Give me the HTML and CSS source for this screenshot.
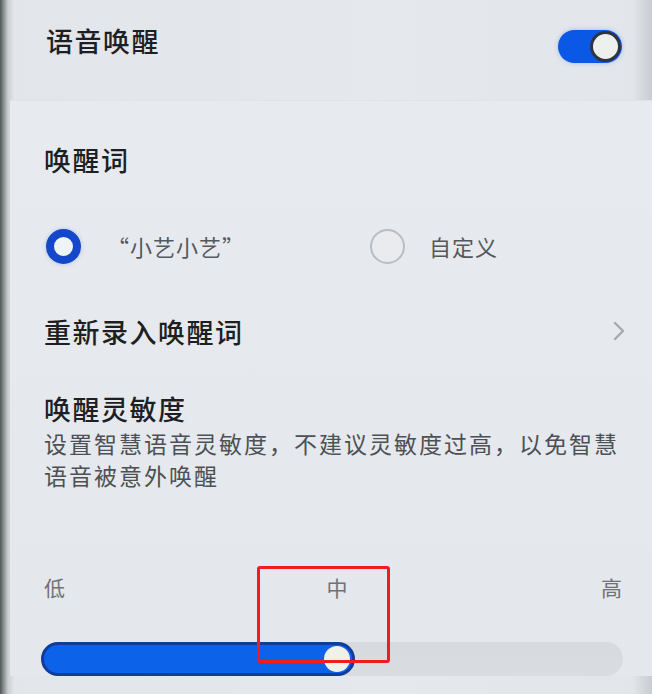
FILE: index.html
```html
<!DOCTYPE html>
<html lang="zh-CN">
<head>
    <meta charset="UTF-8">
    <meta name="viewport" content="width=device-width, initial-scale=1.0">
    <title>语音唤醒</title>
    <link rel="stylesheet" href="styles.css">
</head>
<body>
    <div class="screen">
        <div class="top-row">
            <span class="title">语音唤醒</span>
            <div class="toggle"><div class="toggle-knob"></div></div>
        </div>

        <div class="card">
            <div class="row heading-row">
                <span class="title">唤醒词</span>
            </div>

            <div class="row radio-row">
                <label class="radio-option">
                    <span class="radio radio-on"></span>
                    <span class="radio-text">“小艺小艺”</span>
                </label>
                <label class="radio-option second">
                    <span class="radio"></span>
                    <span class="radio-text">自定义</span>
                </label>
            </div>

            <div class="row link-row">
                <span class="title">重新录入唤醒词</span>
                <svg class="chevron" width="14" height="22" viewBox="0 0 14 22">
                    <path d="M3 3 L11 11 L3 19" fill="none" stroke="#a6a9ae" stroke-width="2.4" stroke-linecap="round" stroke-linejoin="round"/>
                </svg>
            </div>

            <div class="sensitivity">
                <div class="title sens-title">唤醒灵敏度</div>
                <div class="desc">设置智慧语音灵敏度，不建议灵敏度过高，以免智慧<br>语音被意外唤醒</div>
            </div>

            <div class="levels">
                <span>低</span>
                <span class="mid">中</span>
                <span>高</span>
            </div>

            <div class="slider">
                <div class="slider-fill" style="width: 54%"><span class="slider-knob"></span></div>
            </div>
        </div>

        <div class="highlight"></div>
    </div>
</body>
</html>
```

FILE: styles.css
```css
body {
    margin: 0;
    font-family: "Noto Sans CJK SC", "Noto Sans", sans-serif;
    background: #e3e6eb;
}

.screen {
    position: relative;
    width: 652px;
    height: 694px;
    overflow: hidden;
    box-sizing: border-box;
    padding-left: 10px;
    background: linear-gradient(to right, #4f5756 0, #8d9694 4px, #c9cdd0 8px, #e2e5ea 14px, #e5e8ec 60%, #e2e5e9 97%, #c8ccd0 100%);
    color: #1f2124;
}

.title {
    font-size: 27px;
    font-weight: 500;
    letter-spacing: 1.5px;
    color: #1d1f22;
}

.top-row {
    height: 80px;
    display: flex;
    align-items: center;
    justify-content: space-between;
    padding: 0 30px 0 36px;
}

.toggle {
    width: 64px;
    height: 33px;
    margin-top: 12px;
    border-radius: 17px;
    background: #0b58e6;
    box-shadow: 0 0 4px rgba(80, 130, 255, 0.45);
    display: flex;
    justify-content: flex-end;
    align-items: center;
    padding-right: 1px;
    box-sizing: border-box;
}

.toggle-knob {
    width: 31px;
    height: 31px;
    border-radius: 50%;
    background: #eef0ee;
    border: 3px solid #2f3540;
    box-sizing: border-box;
}

.card {
    margin-top: 20px;
    padding: 16px 30px 0 34px;
    background: linear-gradient(to bottom, #e7eaee, #e4e7eb);
    border-top: 1px solid #e0e3e7;
}

.row {
    display: flex;
    align-items: center;
}

.heading-row {
    height: 84px;
}

.radio-row {
    height: 90px;
}

.radio-option {
    display: flex;
    align-items: center;
}

.radio-option.second {
    margin-left: auto;
    margin-right: 124px;
}

.radio {
    width: 35px;
    height: 35px;
    border-radius: 50%;
    border: 2px solid #b9bcc0;
    box-sizing: border-box;
    margin-right: 24px;
    background: #e9ebee;
}

.radio-on {
    border: 8px solid #1447c9;
    background: #eef3f6;
    box-shadow: 0 0 4px rgba(90, 140, 255, 0.4);
    margin-left: 2px;
    margin-right: 26px;
}

.radio-text {
    font-size: 22px;
    color: #55585c;
    letter-spacing: 1px;
}

.link-row {
    height: 80px;
    justify-content: space-between;
}

.chevron {
    margin-right: -4px;
}

.sensitivity {
    padding-top: 18px;
}

.sens-title {
    line-height: 40px;
    height: 40px;
}

.desc {
    margin-top: -2px;
    font-size: 23px;
    line-height: 32px;
    letter-spacing: 2px;
    color: #4d5054;
    white-space: nowrap;
}

.levels {
    margin-top: 80px;
    height: 32px;
    display: flex;
    justify-content: space-between;
    align-items: center;
    font-size: 21px;
    color: #6f7276;
}

.levels .mid {
    margin-left: 8px;
}

.slider {
    margin-top: 39px;
    height: 34px;
    width: 582px;
    margin-left: -3px;
    border-radius: 17px;
    background: linear-gradient(to bottom, #d6d9de, #d9dce1);
}

.slider-fill {
    height: 34px;
    border-radius: 17px;
    background: #0d62ea;
    border: 3px solid #123c9a;
    box-sizing: border-box;
    display: flex;
    justify-content: flex-end;
    align-items: center;
    padding-right: 2px;
}

.slider-knob {
    width: 26px;
    height: 26px;
    border-radius: 50%;
    background: #eef2e8;
}

.highlight {
    position: absolute;
    left: 257px;
    top: 566px;
    width: 133px;
    height: 97px;
    border: 3px solid #f21c1c;
    border-radius: 3px;
    box-sizing: border-box;
}
```
